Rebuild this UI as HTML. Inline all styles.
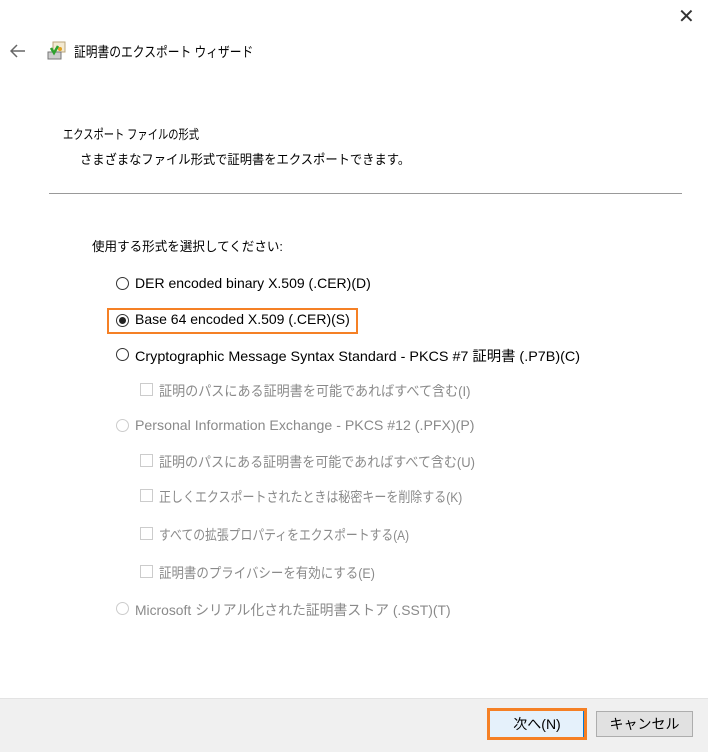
<!DOCTYPE html>
<html><head><meta charset="utf-8"><style>
body{margin:0;width:708px;height:751px;background:#fff;font-family:"Liberation Sans","Noto Sans CJK JP",sans-serif;font-size:14px;color:#000;position:relative;overflow:hidden}
.a{position:absolute;white-space:nowrap;transform-origin:0 50%}
.r{position:absolute;width:13px;height:13px;border:1px solid #333;border-radius:50%;box-sizing:border-box}
.r.g{border-color:#ccc}
.c{position:absolute;width:13px;height:13px;border:1px solid #ccc;box-sizing:border-box}
.gr{color:#8a8a8a}
</style></head><body>
<div class="a" style="left:678px;top:4px;font-size:20px;color:#333">✕</div>
<svg class="a" style="left:10px;top:44px" width="16" height="14"><path d="M1 7H15M7 1L1 7L7 13" stroke="#666" stroke-width="1.5" fill="none"/></svg>
<svg class="a" style="left:47px;top:40px" width="20" height="22"><rect x="6" y="2" width="12" height="10" fill="#f3ead2" stroke="#b9a47a"/><circle cx="13" cy="9" r="2" fill="#e0a020"/><rect x="1" y="12" width="13" height="7" fill="#ccc" stroke="#777"/><path d="M4 8L7 13L11 6" stroke="#2ea12e" stroke-width="2.5" fill="none"/></svg>
<div class="a" style="left:74px;top:42px;font-size:14px;transform:scaleX(0.84)">証明書のエクスポート ウィザード</div>
<div class="a" style="left:63px;top:124px;font-size:13px;transform:scaleX(0.79)">エクスポート ファイルの形式</div>
<div class="a" style="left:80px;top:149px;font-size:13px;transform:scaleX(0.945)">さまざまなファイル形式で証明書をエクスポートできます。</div>
<div class="a" style="left:49px;top:193px;width:633px;height:1px;background:#999"></div>
<div class="a" style="left:92px;top:236px;font-size:13px;transform:scaleX(0.965)">使用する形式を選択してください:</div>

<div class="r" style="left:116px;top:277px"></div>
<div class="a" style="left:135px;top:275px">DER encoded binary X.509 (.CER)(D)</div>

<div class="a" style="left:107px;top:308px;width:251px;height:26px;border:2px solid #f58025;box-sizing:border-box"></div>
<div class="r" style="left:116px;top:314px"><div style="position:absolute;left:2px;top:2px;width:7px;height:7px;border-radius:50%;background:#222"></div></div>
<div class="a" style="left:135px;top:311px">Base 64 encoded X.509 (.CER)(S)</div>

<div class="r" style="left:116px;top:348px"></div>
<div class="a" style="left:135px;top:346px;transform:scaleX(1.025)">Cryptographic Message Syntax Standard - PKCS #7 証明書 (.P7B)(C)</div>

<div class="c" style="left:140px;top:383px"></div>
<div class="a gr" style="left:159px;top:381px;transform:scaleX(0.934)">証明のパスにある証明書を可能であればすべて含む(I)</div>

<div class="r g" style="left:116px;top:419px"></div>
<div class="a gr" style="left:135px;top:417px;transform:scaleX(1.01)">Personal Information Exchange - PKCS #12 (.PFX)(P)</div>

<div class="c" style="left:140px;top:454px"></div>
<div class="a gr" style="left:159px;top:452px;transform:scaleX(0.93)">証明のパスにある証明書を可能であればすべて含む(U)</div>
<div class="c" style="left:140px;top:489px"></div>
<div class="a gr" style="left:159px;top:487px;transform:scaleX(0.856)">正しくエクスポートされたときは秘密キーを削除する(K)</div>
<div class="c" style="left:140px;top:527px"></div>
<div class="a gr" style="left:159px;top:525px;transform:scaleX(0.845)">すべての拡張プロパティをエクスポートする(A)</div>
<div class="c" style="left:140px;top:565px"></div>
<div class="a gr" style="left:159px;top:563px;transform:scaleX(0.89)">証明書のプライバシーを有効にする(E)</div>

<div class="r g" style="left:116px;top:602px"></div>
<div class="a gr" style="left:135px;top:600px;transform:scaleX(0.99)">Microsoft シリアル化された証明書ストア (.SST)(T)</div>

<div class="a" style="left:0;top:698px;width:708px;height:53px;background:#f0f0f0;border-top:1px solid #e3e3e3"></div>
<div class="a" style="left:487px;top:708px;width:100px;height:32px;border:3px solid #f58025;box-sizing:border-box;background:#e5f1fb;text-align:center;line-height:26px;font-size:14px"><div style="position:absolute;right:0;top:0;bottom:0;width:1px;background:#0078d7"></div>次へ(N)</div>
<div class="a" style="left:596px;top:711px;width:97px;height:26px;border:1px solid #adadad;box-sizing:border-box;background:#e1e1e1;text-align:center;line-height:24px;font-size:14px">キャンセル</div>
</body></html>
